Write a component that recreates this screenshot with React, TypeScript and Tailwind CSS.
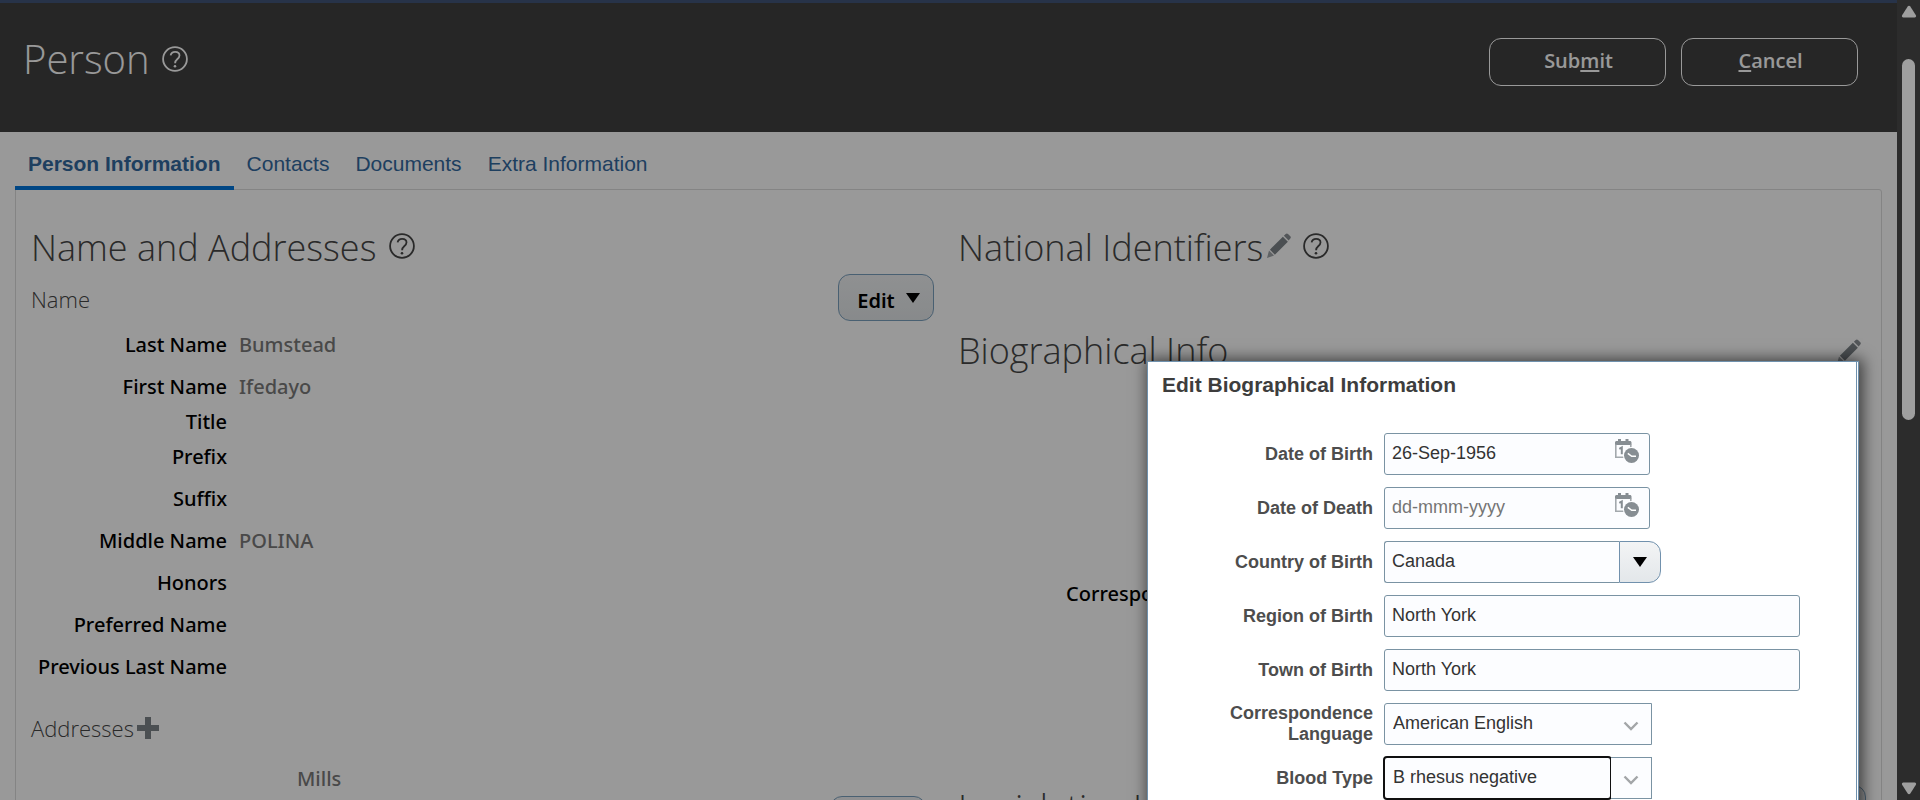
import type { ReactNode } from "react";

function HelpIcon() {
  return (
    <svg viewBox="0 0 26 26" className="h-[26px] w-[26px]" fill="none" stroke="currentColor" aria-hidden="true">
      <circle cx="13" cy="13" r="11.9" strokeWidth="1.8" />
      <path d="M8.6 9.4C9.200 7 11 5.900 13.100 5.900c2.600 0 4.400 1.500 4.400 3.700 0 1.700-1 2.600-2.300 3.700-1.300 1.100-2.100 1.900-2.100 3.900" strokeWidth="1.8" />
      <circle cx="13" cy="20.300" r="1.300" fill="currentColor" stroke="none" />
    </svg>
  );
}

function PencilIcon() {
  return (
    <svg viewBox="0 0 24 26" className="h-[26px] w-6" fill="#7d8489" aria-hidden="true">
      <path d="M2.900 16.700 15.900 3.700l5 5L7.900 21.700z" />
      <path d="M2 17.600 7 22.600 0 25z" fillOpacity="0.75" />
      <path d="M16.900 2.700 18.700 1c.7-.7 1.600-.7 2.300 0l2.300 2.300c.7.700.7 1.600 0 2.300l-1.700 1.800z" fillOpacity="0.9" />
    </svg>
  );
}

function PlusIcon() {
  return (
    <svg viewBox="0 0 22 22" className="h-[22px] w-[22px]" fill="#7d8489" aria-hidden="true">
      <path d="M8 0h6v8h8v6h-8v8H8v-8H0V8h8z" />
    </svg>
  );
}

function TriangleIcon() {
  return (
    <svg viewBox="0 0 14 10" className="h-[10px] w-[14px]" fill="#000" aria-hidden="true">
      <path d="M0 0h14L7 10z" />
    </svg>
  );
}

function ChevronIcon() {
  return (
    <svg viewBox="0 0 16 10" className="h-[10px] w-4" fill="none" stroke="#a3a6a8" strokeWidth="2.400" aria-hidden="true">
      <path d="M1.500 1.500 8 8l6.500-6.500" />
    </svg>
  );
}

function CalendarClockIcon() {
  return (
    <svg viewBox="0 0 24 24" className="h-6 w-6" aria-hidden="true">
      <path d="M0 3.500C0 2.700.7 2 1.500 2H3V0h3v2h4.500V0h3v2H15c.8 0 1.500.7 1.500 1.500V6H0z" fill="#878e93" />
      <path d="M.8 5.500v12.700h8M15.800 5.500v3" fill="none" stroke="#a3a9ad" strokeWidth="1.600" />
      <path d="M4.300 9.800 6.800 8.500v6.800" fill="none" stroke="#878e93" strokeWidth="2" />
      <circle cx="16.500" cy="16.500" r="8.500" fill="#fcfdff" />
      <circle cx="16.500" cy="16.500" r="7.500" fill="#878e93" />
      <path d="m12.800 14.300 3.900 3h4.300" fill="none" stroke="#fff" strokeWidth="1.500" />
    </svg>
  );
}

function SectionHeading({ children }: { children: ReactNode }) {
  return <h2 className="text-[36px] leading-[48px] font-light text-[#464646]">{children}</h2>;
}

function EditButton() {
  return (
    <button
      type="button"
      className="flex h-[47px] w-24 items-center justify-center gap-[11px] rounded-xl border border-[#7ba0be] bg-linear-to-b from-[#eff1f3] to-[#e2e6e8] pl-[5px] font-['Noto_Sans',sans-serif] text-xl font-semibold text-black"
    >
      <span className="pt-[6px]">Edit</span>
      <TriangleIcon />
    </button>
  );
}

const tabs = ["Person Information", "Contacts", "Documents", "Extra Information"];

const names = [
  { label: "Last Name", value: "Bumstead", compact: false },
  { label: "First Name", value: "Ifedayo", compact: true },
  { label: "Title", value: "", compact: true },
  { label: "Prefix", value: "", compact: false },
  { label: "Suffix", value: "", compact: false },
  { label: "Middle Name", value: "POLINA", compact: false },
  { label: "Honors", value: "", compact: false },
  { label: "Preferred Name", value: "", compact: false },
  { label: "Previous Last Name", value: "", compact: false },
];

const fieldClass =
  "h-[42px] rounded-[3px] border border-[#7a93a3] bg-[#fcfdff] px-[7px] pb-[2px] text-lg text-[#333] placeholder:text-[#757575] outline-none";

function FormRow({ id, label, children }: { id: string; label: string; children: ReactNode }) {
  return (
    <div className="flex items-center gap-[11px]">
      <label htmlFor={id} className="w-[170px] text-right text-lg leading-[21px] font-bold text-[#4d4d4d]">
        {label}
      </label>
      {children}
    </div>
  );
}

function DateField({ id, value }: { id: string; value?: string }) {
  return (
    <div className="relative">
      <input id={id} type="text" defaultValue={value} placeholder="dd-mmm-yyyy" className={`${fieldClass} w-[266px]`} />
      <button type="button" aria-label="Select date" className="absolute top-[6px] right-[11px]">
        <CalendarClockIcon />
      </button>
    </div>
  );
}

function BiographicalDialog() {
  return (
    <div
      role="dialog"
      aria-labelledby="dialog-title"
      className="absolute top-[361px] right-[38px] w-[712px] border border-[#6f91ad] bg-white pr-px font-['Liberation_Sans',Arial,sans-serif] shadow-[2px_0_14px_2px_rgba(0,0,0,0.6)]"
    >
      <div className="border-r border-[#6f91ad] pb-10">
        <h2 id="dialog-title" className="px-[14px] pt-[9px] text-[21px] leading-7 font-bold text-[#3d3d3d]">
          Edit Biographical Information
        </h2>
        <form className="flex flex-col gap-3 pt-[34px] pl-[55px]">
          <FormRow id="dob" label="Date of Birth">
            <DateField id="dob" value="26-Sep-1956" />
          </FormRow>
          <FormRow id="dod" label="Date of Death">
            <DateField id="dod" />
          </FormRow>
          <FormRow id="country" label="Country of Birth">
            <div className="flex">
              <input id="country" type="text" defaultValue="Canada" className={`${fieldClass} w-[235px] rounded-r-none border-r-0`} />
              <button
                type="button"
                aria-label="Search countries"
                className="flex h-[42px] w-[42px] items-center justify-center rounded-r-xl border border-[#7191ad] bg-linear-to-b from-[#f3f4f5] to-[#e3e7ea]"
              >
                <TriangleIcon />
              </button>
            </div>
          </FormRow>
          <FormRow id="region" label="Region of Birth">
            <input id="region" type="text" defaultValue="North York" className={`${fieldClass} w-[416px]`} />
          </FormRow>
          <FormRow id="town" label="Town of Birth">
            <input id="town" type="text" defaultValue="North York" className={`${fieldClass} w-[416px]`} />
          </FormRow>
          <FormRow id="language" label="Correspondence Language">
            <div className="relative">
              <select
                id="language"
                className="h-[42px] w-[268px] appearance-none rounded-l-[3px] border border-[#7a93a3] bg-[#fcfdff] px-[8px] pb-[3px] text-lg text-[#333]"
              >
                <option>American English</option>
              </select>
              <span className="pointer-events-none absolute top-[18px] right-[13px]">
                <ChevronIcon />
              </span>
            </div>
          </FormRow>
          <FormRow id="blood" label="Blood Type">
            <div className="flex">
              <select
                id="blood"
                className="h-[42px] w-[227px] appearance-none rounded-[3px] bg-[#fcfdff] px-[9px] pb-[3px] text-lg text-[#333] outline-2 -outline-offset-1 outline-[#101010]"
              >
                <option>B rhesus negative</option>
              </select>
              <span className="flex w-[41px] items-center justify-center border border-l-0 border-[#7a93a3] bg-[#fcfdff] pt-1">
                <ChevronIcon />
              </span>
            </div>
          </FormRow>
        </form>
      </div>
    </div>
  );
}

function PageHeader() {
  return (
    <header className="flex h-[132px] items-start justify-between border-t-[3px] border-[#42567a] bg-[#404040] pt-[35px] pr-[39px] pl-[23px] text-white">
      <div className="flex items-center gap-3">
        <h1 className="text-[40px] leading-[42px] font-light">Person</h1>
        <button type="button" aria-label="Help for Person">
          <HelpIcon />
        </button>
      </div>
      <div className="flex gap-[15px]">
        <button type="button" className="h-12 w-[177px] rounded-xl border border-white pb-[3px] pl-[2px] text-xl font-semibold">
          Sub<span className="underline decoration-2 underline-offset-2">m</span>it
        </button>
        <button type="button" className="h-12 w-[177px] rounded-xl border border-white pb-[3px] pl-[2px] text-xl font-semibold">
          <span className="underline decoration-2 underline-offset-2">C</span>ancel
        </button>
      </div>
    </header>
  );
}

function NameAndAddresses() {
  return (
    <section className="min-w-0 flex-1">
      <div className="flex items-start gap-[13px]">
        <SectionHeading>Name and Addresses</SectionHeading>
        <button type="button" aria-label="Help for Name and Addresses" className="mt-[9px] text-[#464646]">
          <HelpIcon />
        </button>
      </div>
      <div className="mt-[2px] flex items-center justify-between">
        <h3 className="pt-[2px] text-[22px] leading-[30px] font-light text-[#464646]">Name</h3>
        <EditButton />
      </div>
      <dl className="mt-[10px] font-['Noto_Sans',sans-serif] text-xl leading-7 font-medium">
        {names.map((row) => (
          <div key={row.label} className={row.compact ? "flex h-[35px] gap-3" : "flex h-[42px] gap-3"}>
            <dt className="w-[196px] text-right text-black">{row.label}</dt>
            <dd className="text-[#7a7a7a]">{row.value}</dd>
          </div>
        ))}
      </dl>
      <div className="mt-[18px] flex items-center gap-[3px]">
        <h3 className="text-[22px] leading-[30px] font-light text-[#464646]">Addresses</h3>
        <button type="button" aria-label="Add address">
          <PlusIcon />
        </button>
      </div>
      <p className="mt-[22px] pl-[266px] font-['Noto_Sans',sans-serif] text-xl leading-7 font-medium text-[#7a7a7a]">Mills</p>
      <div className="mt-[3px] flex justify-end pr-2">
        <EditButton />
      </div>
    </section>
  );
}

function Identifiers() {
  return (
    <section className="min-w-0 flex-1">
      <div className="flex items-start">
        <SectionHeading>National Identifiers</SectionHeading>
        <button type="button" aria-label="Edit national identifiers" className="mt-[9px] ml-1">
          <PencilIcon />
        </button>
        <button type="button" aria-label="Help for National Identifiers" className="mt-[9px] ml-3 text-[#464646]">
          <HelpIcon />
        </button>
      </div>
      <div className="mt-[55px] flex items-start justify-between">
        <SectionHeading>Biographical Info</SectionHeading>
        <button type="button" aria-label="Edit biographical info" className="mt-3">
          <PencilIcon />
        </button>
      </div>
      <p className="mt-[205px] pl-[108px] font-['Noto_Sans',sans-serif] text-xl leading-7 font-medium text-black">
        Correspondence Language
      </p>
      <div className="mt-[176px] flex items-center justify-between">
        <SectionHeading>Legislative Info</SectionHeading>
        <div className="-mr-[5px]">
          <EditButton />
        </div>
      </div>
    </section>
  );
}

function ScrollRail() {
  return (
    <div className="flex w-[23px] shrink-0 flex-col items-center justify-between bg-[#2c2c2c] py-[5px]" aria-hidden="true">
      <div className="flex h-full flex-col items-center">
        <svg viewBox="0 0 16 13" className="h-[13px] w-4" fill="#9f9f9f">
          <path d="M6.700 1.500c.6-.9 2-.9 2.600 0l5.600 8.800c.6 1-.1 2.200-1.200 2.200H2.300c-1.100 0-1.800-1.200-1.200-2.200z" />
        </svg>
        <div className="mt-[41px] h-[361px] w-[13px] rounded-full bg-[#9f9f9f]" />
      </div>
      <svg viewBox="0 0 16 13" className="h-[13px] w-4 shrink-0" fill="#9f9f9f">
        <path d="M6.700 11.500c.6.900 2 .9 2.600 0l5.600-8.800c.6-1-.1-2.200-1.200-2.200H2.300c-1.100 0-1.800 1.200-1.200 2.200z" />
      </svg>
    </div>
  );
}

export default function App() {
  return (
    <div className="flex h-screen overflow-hidden bg-white font-['Open_Sans','Segoe_UI',sans-serif]">
      <div className="relative min-w-0 flex-1 overflow-hidden">
        <PageHeader />
        <nav className="flex h-[58px] px-[15px] font-['Liberation_Sans',Arial,sans-serif] text-[21px]">
          {tabs.map((tab, i) => (
            <a
              key={tab}
              href="#"
              className={
                i === 0
                  ? "relative flex items-center border-b-4 border-[#0076dd] px-[13px] pt-[10px] font-bold text-[#33699f]"
                  : "flex items-center border-b-4 border-transparent px-[13px] pt-[10px] text-[#33699f]"
              }
            >
              {tab}
            </a>
          ))}
        </nav>
        <main className="mx-[15px] -mt-px flex gap-6 rounded-tr-[3px] border border-[#dcdcdc] pt-[34px] pr-5 pb-10 pl-[15px]">
          <NameAndAddresses />
          <Identifiers />
        </main>
        <div className="absolute inset-0 bg-black/40" />
        <BiographicalDialog />
      </div>
      <ScrollRail />
    </div>
  );
}
